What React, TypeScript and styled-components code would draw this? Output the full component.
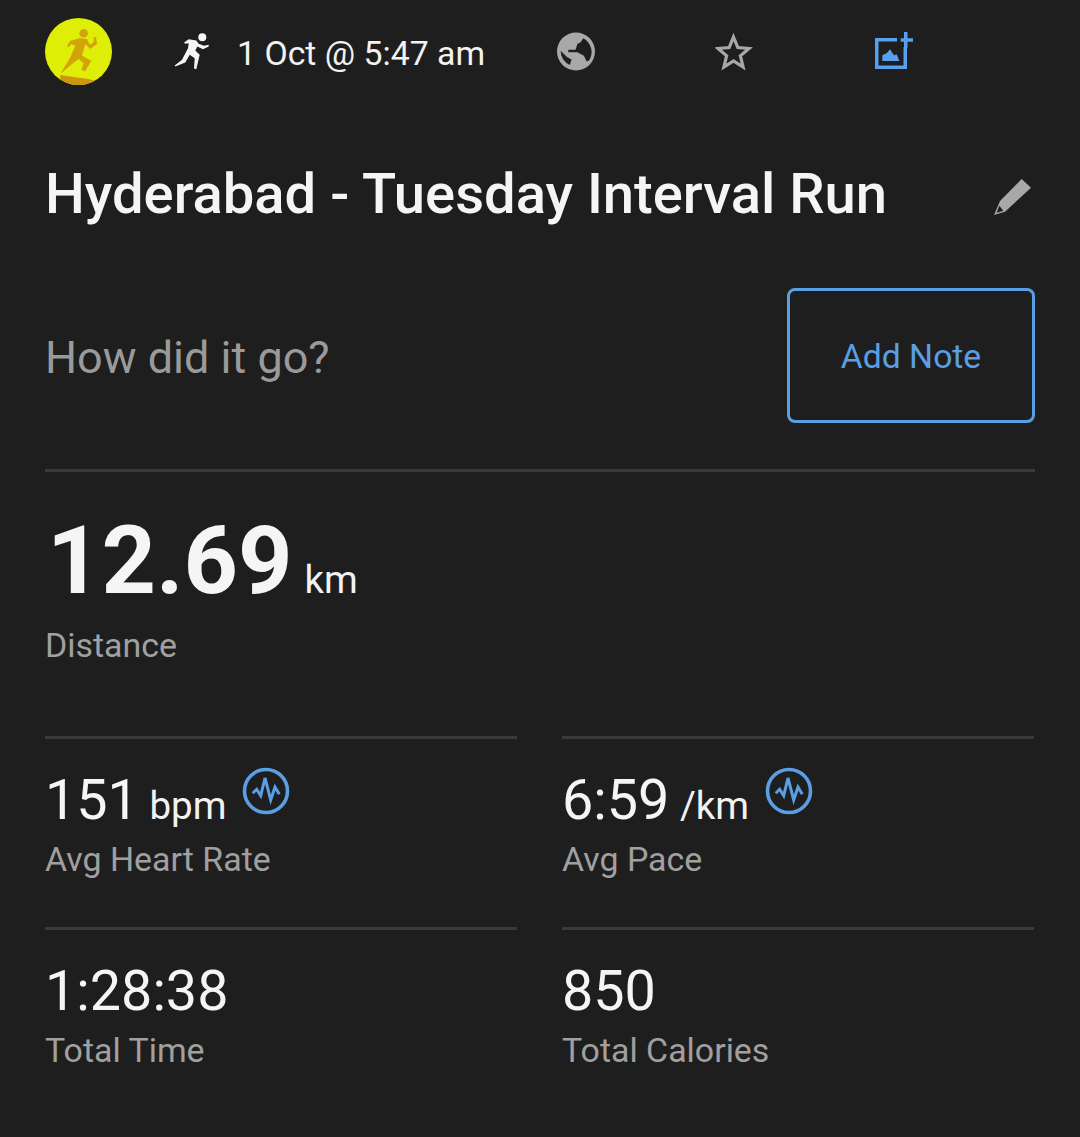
import React from "react";
import styled, { createGlobalStyle } from "styled-components";

const Global = createGlobalStyle`
  html, body { margin: 0; padding: 0; background: #1e1e1e; }
  body { font-family: Roboto, "Liberation Sans", sans-serif; }
`;

const Page = styled.div`
  width: 1080px;
  height: 1137px;
  box-sizing: border-box;
  padding: 18px 45px 0 45px;
  background: #1e1e1e;
  overflow: hidden;
`;

const TopBar = styled.div`
  display: flex;
  align-items: center;
  height: 67px;
`;

const Avatar = styled.svg`
  width: 67px;
  height: 67px;
  flex: none;
`;

const RunIcon = styled.svg`
  width: 40px;
  height: 40px;
  margin-left: 60px;
  flex: none;
`;

const DateText = styled.span`
  margin-left: 25px;
  padding-top: 4px;
  width: 319px;
  flex: none;
  font-size: 33.8px;
  color: #f2f2f2;
  white-space: nowrap;
`;

const TopIcon = styled.svg<{ $gap: number }>`
  width: 40px;
  height: 40px;
  flex: none;
  margin-left: ${(p) => p.$gap}px;
`;

const TitleRow = styled.div`
  display: flex;
  align-items: center;
  justify-content: space-between;
  margin-top: 74px;
  height: 70px;
`;

const Title = styled.h1`
  margin: 0;
  font-size: 56.15px;
  font-weight: 500;
  color: #f5f5f5;
  white-space: nowrap;
`;

const Pencil = styled.svg`
  width: 40px;
  height: 40px;
  margin: 8px 2px 0 0;
  flex: none;
`;

const NoteRow = styled.div`
  display: flex;
  align-items: center;
  justify-content: space-between;
  margin-top: 59px;
  padding-bottom: 46px;
  border-bottom: 3px solid #3a3a3a;
`;

const Prompt = styled.span`
  font-size: 45px;
  color: #9a9a9a;
  padding-top: 3px;
`;

const NoteButton = styled.button`
  width: 248px;
  height: 135px;
  box-sizing: border-box;
  border: 3px solid #5a9fe3;
  border-radius: 8px;
  padding: 2px 0 0;
  background: transparent;
  color: #5a9fe3;
  font-family: inherit;
  font-size: 33.7px;
`;

const Distance = styled.div`
  display: flex;
  align-items: baseline;
  margin-top: 41px;
  height: 96px;
  padding-left: 2px;
`;

const BigValue = styled.span`
  font-size: 95px;
  line-height: 96px;
  font-weight: 700;
  color: #f5f5f5;
`;

const BigUnit = styled.span`
  font-size: 38.5px;
  color: #f2f2f2;
  margin-left: 12px;
`;

const Caption = styled.div`
  font-size: 33.9px;
  line-height: 40px;
  color: #a0a0a0;
`;

const DistanceCaption = styled(Caption)`
  margin-top: 17px;
`;

const StatGrid = styled.div`
  display: grid;
  grid-template-columns: 472px 472px;
  column-gap: 45px;
  margin-top: 70px;
`;

const Stat = styled.div`
  border-top: 3px solid #3a3a3a;
  height: 191px;
  box-sizing: border-box;
`;

const ValueRow = styled.div`
  display: flex;
  align-items: baseline;
  height: 73px;
  padding-top: 25px;
`;

const Value = styled.span`
  font-size: 55.7px;
  line-height: 73px;
  color: #f5f5f5;
`;

const Unit = styled.span`
  font-size: 38.5px;
  color: #f2f2f2;
  margin-left: 10.5px;
`;

const Wave = styled.svg`
  width: 48px;
  height: 48px;
  align-self: flex-start;
  margin-left: 16px;
  margin-top: 3px;
  flex: none;
`;

const StatCaption = styled(Caption)`
  margin-top: 3px;
`;

const WaveIcon = () => (
  <Wave viewBox="0 0 48 48" fill="none" stroke="#5a9fe3">
    <circle cx="24" cy="24" r="21.500" strokeWidth="3.600" />
    <path d="M10.700 26.300l4-4 4 6.400L23 11l5.700 22 4.300-13 4.300 7.300" strokeWidth="3" />
  </Wave>
);

const stats = [
  { value: "151", unit: "bpm", label: "Avg Heart Rate", wave: true },
  { value: "6:59", unit: "/km", label: "Avg Pace", wave: true },
  { value: "1:28:38", label: "Total Time" },
  { value: "850", label: "Total Calories" },
];

export default function App() {
  return (
    <Page>
      <Global />
      <TopBar>
        <Avatar viewBox="0 0 67 67">
          <defs>
            <clipPath id="disc"><circle cx="33.5" cy="33.5" r="33.5" /></clipPath>
          </defs>
          <circle cx="33.5" cy="33.500" r="33.500" fill="#dfee06" />
          <g clipPath="url(#disc)">
            <path d="M15.300 57L30.300 59.300 43.700 61 53.700 64.300 54 70H15z" fill="#cc9710" />
            <circle cx="38.700" cy="15.300" r="4.300" fill="#d3a40a" />
            <path
              fill="#d3a40a"
              d="M22 27.700L25.300 22.700 35.300 20 42 21 44.700 26.700 48.700 24.300 48.700 18.700 51 19.300 52 26 45.300 31 40.300 26 37 37.700 46.300 42.700 40.300 53.300 36.300 52 38.700 45.300 33.700 41 27 46 15.300 56 25.300 39.300 30.300 27.700 26.300 26 23.700 29.300z"
            />
          </g>
        </Avatar>
        <RunIcon viewBox="0 0 40 40" fill="#f5f5f5">
          <circle cx="30.300" cy="5.200" r="4" />
          <path d="M12 10.500L16.700 7.200 24.300 8.500 26.700 11.800 32 13.800 36.700 12.800 36.700 14.500 31 17.200 25.300 14.500 23.300 18.500 27.700 22.800 24.300 37.200 22 36.500 22.700 26.200 17.700 22.800 13.300 30.500 3.300 34.500 2.700 33.500 10 27.800 16 16.200 16.700 11.200 13.300 11.800z" />
        </RunIcon>
        <DateText>1 Oct @ 5:47 am</DateText>
        <TopIcon $gap={0} viewBox="0 0 40 40">
          <path
            fill="#a8a8a8"
            fillRule="evenodd"
            d="M20 .5a19 19 0 1 0 0 38 19 19 0 0 0 0-38zM12.300 17.700H19.600L21.300 12 24.600 10.300 27.300 6.300A15.500 15.500 0 0 1 32.900 28.700L30.600 29.300 27.900 23.700 21.300 20.300H12.300zM4.600 18.700L11.300 25.300 15.500 27.500 13.900 33A15.500 15.500 0 0 1 4.600 18.700z"
          />
        </TopIcon>
        <TopIcon $gap={119} viewBox="0 0 40 40" fill="none" stroke="#a8a8a8">
          <path d="M18.500 5l4.300 10.600 11.200.9-8.600 7.300 2.700 11.200-9.600-6-9.600 6 2.700-11.200-8.600-7.300 11.200-.9z" strokeWidth="3.200" />
        </TopIcon>
        <TopIcon $gap={120} viewBox="0 0 40 40">
          <path fill="#56a0ee" d="M0 6H22V9.500H3.500V33.500H28.500V15H32V37H0z" />
          <path fill="#56a0ee" d="M29 0H32.500V6.200H38V9.700H32.500V16H29V9.700H25.700V6.200H29z" />
          <path fill="#56a0ee" d="M7.300 29V23.300L11.700 21.300 15 17.300 19 23.300 21.700 22.300 24.300 29z" />
        </TopIcon>
      </TopBar>

      <TitleRow>
        <Title>Hyderabad - Tuesday Interval Run</Title>
        <Pencil viewBox="0 0 40 40">
          <path fill="#a8a8a8" d="M1 37L7 23 28.700 1 38 9.700 12 33.700z" />
          <path fill="#1e1e1e" d="M6.300 27.700L10.300 32.700 3.700 34.700z" />
        </Pencil>
      </TitleRow>

      <NoteRow>
        <Prompt>How did it go?</Prompt>
        <NoteButton>Add Note</NoteButton>
      </NoteRow>

      <Distance>
        <BigValue>12.69</BigValue>
        <BigUnit>km</BigUnit>
      </Distance>
      <DistanceCaption>Distance</DistanceCaption>

      <StatGrid>
        {stats.map((s) => (
          <Stat key={s.label}>
            <ValueRow>
              <Value>{s.value}</Value>
              {s.unit && <Unit>{s.unit}</Unit>}
              {s.wave && <WaveIcon />}
            </ValueRow>
            <StatCaption>{s.label}</StatCaption>
          </Stat>
        ))}
      </StatGrid>
    </Page>
  );
}
